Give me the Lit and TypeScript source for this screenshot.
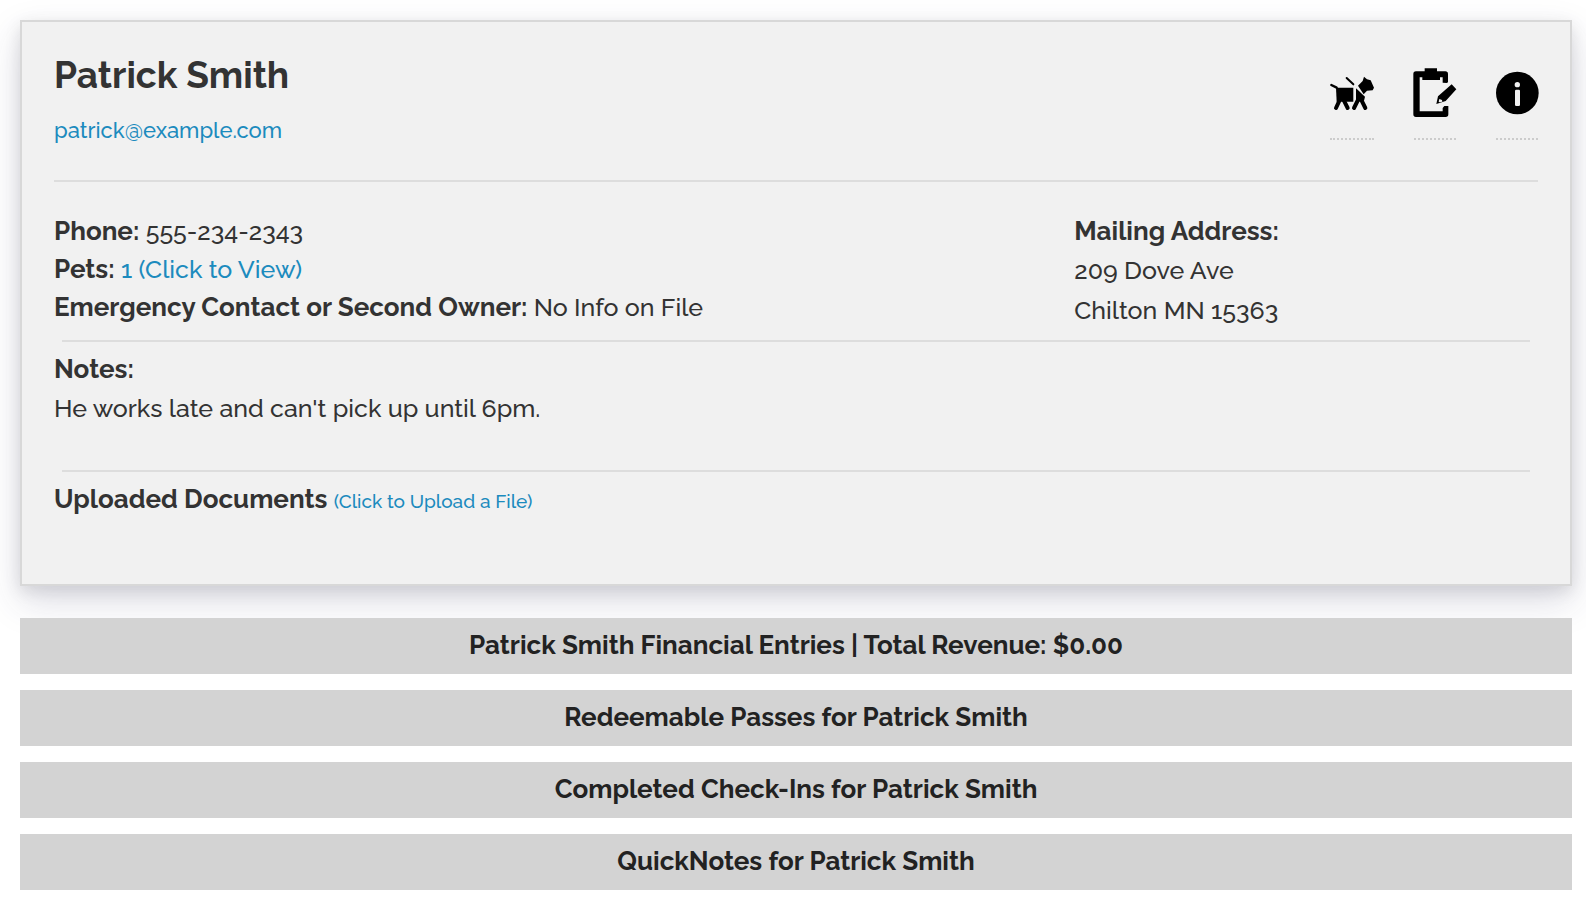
import { LitElement, html, css, svg } from "lit";
import { customElement, property } from "lit/decorators.js";

const dogIcon = svg`
  <path d="M64 105l16 8" stroke="#000" stroke-width="7" stroke-linecap="round"/>
  <path d="M78 113h52v42h-50z"/>
  <path d="M110 84l20 19" stroke="#000" stroke-width="6" stroke-linecap="round"/>
  <path d="M90 148l-12 26M100 148l13 26" fill="none" stroke="#000" stroke-width="12" stroke-linecap="round"/>
  <path d="M144 107l14-14 4-13 9 8 11 3 10 22-4 8-17 1-10 11z"/>
  <path d="M138 115l27 25-3 12-24 4z"/>
  <path d="M144 150l-12 24M152 146l14 28" fill="none" stroke="#000" stroke-width="12" stroke-linecap="round"/>
`;

const clipboardIcon = svg`
  <path d="M317 64h27v-9h37v9h25q8 0 8 8v25l-4 2-12-1V82h-8v8h-53v-8h-8v102h69v-10l5-6h12v25q0 8-8 8h-89q-8 0-8-8V72q0-8 8-8z"/>
  <path fill-rule="evenodd" d="M425 103l14 15-32 35-28 9 5-23zM388 147l-2 8 3 2 8-2-1-5z"/>
`;

const infoIcon = svg`
  <circle cx="622" cy="129" r="64"/>
  <circle cx="622" cy="104" r="8" fill="#f1f1f1"/>
  <rect x="615" y="119" width="15" height="49" rx="4" fill="#f1f1f1"/>
`;

@customElement("section-bar")
export class SectionBar extends LitElement {
  @property() label = "";

  static styles = css`
    :host { display: block; }
    .bar {
      display: block;
      width: 100%;
      margin: 0;
      padding: 9px 16px 11px;
      border: 0;
      background: #d3d3d3;
      color: #222;
      font: inherit;
      font-weight: 700;
      font-size: 26px;
      line-height: 36px;
      text-align: center;
      cursor: pointer;
    }
  `;

  render() {
    return html`<button class="bar" type="button">${this.label}</button>`;
  }
}

@customElement("app-root")
export class AppRoot extends LitElement {
  static styles = css`
    :host {
      display: block;
      padding: 20px 14px 14px 20px;
      background: #fff;
      color: #333;
      font-family: Raleway, Lato, "Open Sans", sans-serif;
      font-size: 25px;
      font-weight: 500;
      line-height: 38px;
    }
    .card {
      box-sizing: border-box;
      padding: 32px 32px 64px;
      border: 2px solid #d8d8d8;
      background: #f1f1f1;
      box-shadow: 0 15px 35px rgba(50, 50, 93, 0.17), 0 5px 15px rgba(0, 0, 0, 0.1);
    }
    .head {
      display: flex;
      justify-content: space-between;
      padding-bottom: 31px;
      border-bottom: 2px solid #ddd;
    }
    .name { margin: 0; font-size: 37px; line-height: 42px; font-weight: 700; }
    .email { display: block; margin-top: 15px; font-size: 22px; }
    .link { color: #1c8bbe; text-decoration: none; }
    .small { font-size: 19px; }
    .actions { display: flex; gap: 40px; align-items: flex-start; padding-top: 14px; }
    .action { display: block; width: 42px; padding-bottom: 20px; border-bottom: 2px dotted #ccc; }
    .action.wide { width: 44px; }
    .icon { display: block; width: 100%; height: 50px; overflow: visible; }
    .details { display: grid; grid-template-columns: 11fr 5fr; padding: 30px 0 10px; }
    .line { margin: 0; }
    .label { font-size: 26px; font-weight: 700; }
    .tall { line-height: 40px; }
    .rule { height: 0; margin: 0 8px; border: 0; border-top: 2px solid #ddd; }
    .notes { padding: 8px 0 42px; }
    .docs { padding-top: 8px; }
    .bars { display: grid; gap: 16px; margin-top: 32px; position: relative; }
  `;

  private sections = [
    "Patrick Smith Financial Entries | Total Revenue: $0.00",
    "Redeemable Passes for Patrick Smith",
    "Completed Check-Ins for Patrick Smith",
    "QuickNotes for Patrick Smith",
  ];

  render() {
    return html`
      <section class="card">
        <header class="head">
          <div>
            <h1 class="name">Patrick Smith</h1>
            <a class="link email" href="mailto:patrick@example.com">patrick@example.com</a>
          </div>
          <nav class="actions">
            <a class="action wide" href="#pets" aria-label="Pets">
              <svg class="icon" viewBox="60 54 132 150">${dogIcon}</svg>
            </a>
            <a class="action" href="#edit" aria-label="Edit">
              <svg class="icon" viewBox="312 54 126 150">${clipboardIcon}</svg>
            </a>
            <a class="action" href="#info" aria-label="Info">
              <svg class="icon" viewBox="558 54 126 150">${infoIcon}</svg>
            </a>
          </nav>
        </header>
        <div class="details">
          <div>
            <p class="line"><b class="label">Phone:</b> 555-234-2343</p>
            <p class="line"><b class="label">Pets:</b> <a class="link" href="#pets">1 (Click to View)</a></p>
            <p class="line"><b class="label">Emergency Contact or Second Owner:</b> No Info on File</p>
          </div>
          <div>
            <p class="line"><b class="label">Mailing Address:</b></p>
            <p class="line tall">209 Dove Ave</p>
            <p class="line tall">Chilton MN 15363</p>
          </div>
        </div>
        <hr class="rule" />
        <div class="notes">
          <p class="line"><b class="label">Notes:</b></p>
          <p class="line tall">He works late and can't pick up until 6pm.</p>
        </div>
        <hr class="rule" />
        <div class="docs">
          <p class="line"><b class="label">Uploaded Documents</b> <a class="link small" href="#upload">(Click to Upload a File)</a></p>
        </div>
      </section>
      <div class="bars">
        ${this.sections.map((s) => html`<section-bar .label=${s}></section-bar>`)}
      </div>
    `;
  }
}
